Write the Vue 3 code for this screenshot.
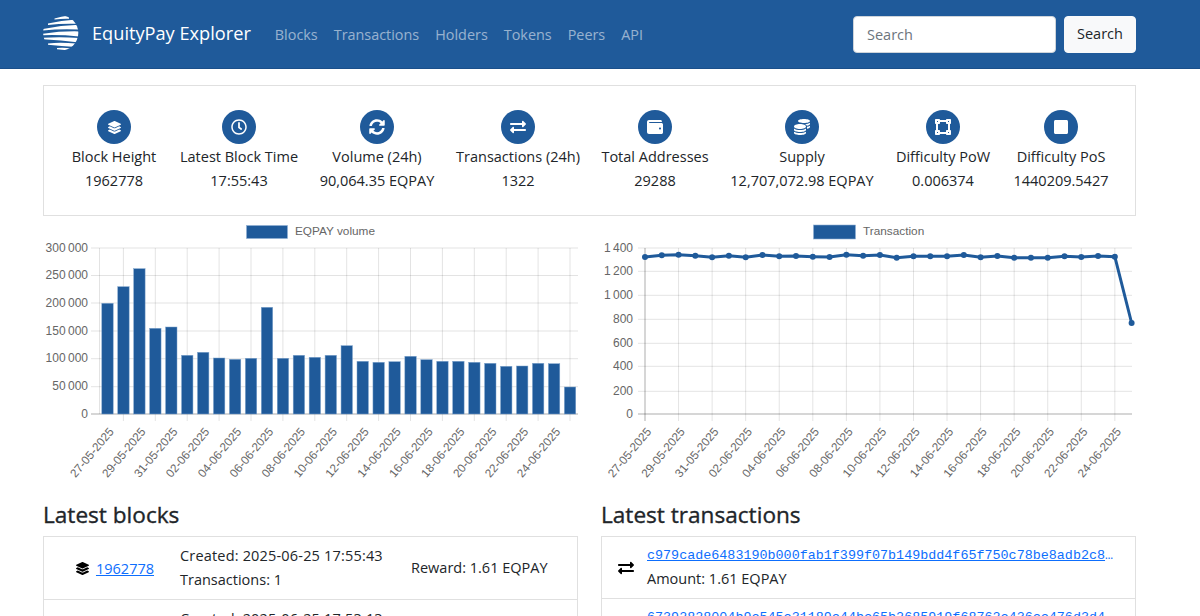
<script setup>
const icons = {
  layers: { vb: '0 0 512 512', d: 'M12.41 148.02l232.94 105.67c6.8 3.09 14.49 3.09 21.29 0l232.94-105.67c16.55-7.51 16.55-32.52 0-40.03L266.65 2.31a25.607 25.607 0 0 0-21.29 0L12.41 107.98c-16.55 7.51-16.55 32.53 0 40.04zm487.18 88.28l-58.09-26.33-161.64 73.27c-7.56 3.43-15.59 5.17-23.86 5.17s-16.29-1.74-23.86-5.17L70.51 209.97l-58.1 26.33c-16.55 7.5-16.55 32.5 0 40l232.94 105.59c6.8 3.08 14.49 3.08 21.29 0L499.59 276.3c16.55-7.5 16.55-32.5 0-40zm0 127.8l-57.87-26.23-161.86 73.37c-7.56 3.43-15.59 5.17-23.86 5.17s-16.29-1.74-23.86-5.17L70.29 337.87 12.41 364.1c-16.55 7.5-16.55 32.5 0 40l232.94 105.59c6.8 3.08 14.49 3.08 21.29 0L499.59 404.1c16.55-7.5 16.55-32.5 0-40z' },
  clock: { vb: '0 0 512 512', d: 'M256 8C119 8 8 119 8 256s111 248 248 248 248-111 248-248S393 8 256 8zm0 448c-110.5 0-200-89.5-200-200S145.5 56 256 56s200 89.5 200 200-89.5 200-200 200zm61.8-104.4l-84.9-61.7c-3.1-2.3-4.9-5.9-4.9-9.7V116c0-6.6 5.4-12 12-12h32c6.6 0 12 5.4 12 12v141.7l66.8 48.6c5.4 3.9 6.5 11.4 2.6 16.8L334.6 349c-3.9 5.3-11.4 6.5-16.8 2.6z' },
  sync: { vb: '0 0 512 512', d: 'M370.72 133.28C339.458 104.008 298.888 87.962 255.848 88c-77.458.068-144.328 53.178-162.791 126.85-1.344 5.363-6.122 9.15-11.651 9.15H24.103c-7.498 0-13.194-6.807-11.807-14.176C33.933 94.924 134.813 8 256 8c66.448 0 126.791 26.136 171.315 68.685L463.03 40.97C478.149 25.851 504 36.559 504 57.941V192c0 13.255-10.745 24-24 24H345.941c-21.382 0-32.09-25.851-16.971-40.971l41.75-41.749zM32 296h134.059c21.382 0 32.09 25.851 16.971 40.971l-41.75 41.75c31.262 29.273 71.835 45.319 114.876 45.28 77.418-.07 144.315-53.144 162.787-126.849 1.344-5.363 6.122-9.15 11.651-9.15h57.304c7.498 0 13.194 6.807 11.807 14.176C478.067 417.076 377.187 504 256 504c-66.448 0-126.791-26.136-171.315-68.685L48.97 471.03C33.851 486.149 8 475.441 8 454.059V320c0-13.255 10.745-24 24-24z' },
  exchange: { vb: '0 0 512 512', d: 'M0 168v-16c0-13.255 10.745-24 24-24h360V80c0-21.367 25.899-32.042 40.971-16.971l80 80c9.372 9.373 9.372 24.569 0 33.941l-80 80C409.956 271.982 384 261.456 384 240v-48H24c-13.255 0-24-10.745-24-24zm488 152H128v-48c0-21.314-25.862-32.08-40.971-16.971l-80 80c-9.372 9.373-9.372 24.569 0 33.941l80 80C102.057 463.997 128 453.437 128 432v-48h360c13.255 0 24-10.745 24-24v-16c0-13.255-10.745-24-24-24z' },
  wallet: { vb: '0 0 512 512', d: 'M461.2 128H80c-8.84 0-16-7.16-16-16s7.16-16 16-16h384c8.84 0 16-7.16 16-16 0-26.51-21.49-48-48-48H64C28.65 32 0 60.65 0 96v320c0 35.35 28.65 64 64 64h397.2c28.02 0 50.8-21.53 50.8-48V176c0-26.47-22.78-48-50.8-48zM416 336c-17.67 0-32-14.33-32-32s14.33-32 32-32 32 14.33 32 32-14.33 32-32 32z' },
  coins: { vb: '0 0 512 512', d: 'M0 405.3V448c0 35.3 86 64 192 64s192-28.7 192-64v-42.7C342.7 434.4 267.2 448 192 448S41.3 434.4 0 405.3zM320 128c106 0 192-28.7 192-64S426 0 320 0 128 28.7 128 64s86 64 192 64zM0 300.4V352c0 35.3 86 64 192 64s192-28.7 192-64v-51.6c-41.3 34-116.9 51.6-192 51.6S41.3 334.4 0 300.4zm416 11c57.3-11.1 96-31.7 96-55.4v-42.7c-23.2 16.4-57.3 27.6-96 34.5v63.6zM192 160C86 160 0 195.8 0 240s86 80 192 80 192-35.8 192-80-86-80-192-80zm219.3 56.3c60-10.8 100.7-32 100.7-56.3v-42.7c-35.5 25.1-96.5 38.6-160.7 41.8 29.5 14.3 51.2 33.5 60 57.2z' },
  vector: { vb: '0 0 512 512', d: 'M512 128V32c0-17.67-14.33-32-32-32h-96c-17.67 0-32 14.33-32 32H160c0-17.67-14.33-32-32-32H32C14.33 0 0 14.33 0 32v96c0 17.67 14.33 32 32 32v192c-17.67 0-32 14.33-32 32v96c0 17.67 14.33 32 32 32h96c17.67 0 32-14.33 32-32h192c0 17.67 14.33 32 32 32h96c17.67 0 32-14.33 32-32v-96c0-17.67-14.33-32-32-32V160c17.67 0 32-14.33 32-32zm-96-64h32v32h-32V64zM64 64h32v32H64V64zm32 384H64v-32h32v32zm352 0h-32v-32h32v32zm-32-96h-32c-17.67 0-32 14.33-32 32v32H160v-32c0-17.67-14.33-32-32-32H96V160h32c17.67 0 32-14.33 32-32V96h192v32c0 17.67 14.33 32 32 32h32v192z' },
  square: { vb: '0 0 448 512', d: 'M400 32H48C21.5 32 0 53.5 0 80v352c0 26.5 21.5 48 48 48h352c26.5 0 48-21.5 48-48V80c0-26.5-21.5-48-48-48z' },
}

const navLinks = ['Blocks', 'Transactions', 'Holders', 'Tokens', 'Peers', 'API']

const stats = [
  { icon: 'layers', size: 13, label: 'Block Height', value: '1962778' },
  { icon: 'clock', size: 16, label: 'Latest Block Time', value: '17:55:43' },
  { icon: 'sync', size: 16, label: 'Volume (24h)', value: '90,064.35 EQPAY' },
  { icon: 'exchange', size: 16, label: 'Transactions (24h)', value: '1322' },
  { icon: 'wallet', size: 16, label: 'Total Addresses', value: '29288' },
  { icon: 'coins', size: 16, label: 'Supply', value: '12,707,072.98 EQPAY' },
  { icon: 'vector', size: 16, label: 'Difficulty PoW', value: '0.006374' },
  { icon: 'square', size: 16, label: 'Difficulty PoS', value: '1440209.5427' },
]

const logoStripes = [
  'M11.5 3.6 Q18 1.6 26 .6 L26 3.8 Q18 3.6 11.5 4.6Z',
  'M5 8.6 Q18 5.2 33 4.4 L33 8.8 Q18 8.4 5 10Z',
  'M0 14 Q18 10.4 36 9.8 L36 14.6 Q18 13.8 0 15.4Z',
  'M0 18.8 Q18 16 36 16.4 L36 21.4 Q18 19.6 0 20.2Z',
  'M0 22.8 Q18 21.8 36 23 L36 27.6 Q18 25.2 0 24.2Z',
  'M5 28.4 Q18 27.2 33 28.6 L33 32 Q18 31.2 5 29.8Z',
  'M14 33 Q22 32.6 28 33.4 L28 35.6 Q22 35.2 14 34.2Z',
]

const dateLabels = ['27-05-2025','29-05-2025','31-05-2025','02-06-2025','04-06-2025','06-06-2025','08-06-2025','10-06-2025','12-06-2025','14-06-2025','16-06-2025','18-06-2025','20-06-2025','22-06-2025','24-06-2025']

/* bar chart: canvas spans x 43..578, y 220..490 */
const barOX = 43
const barTop = [303.3,286.7,268.7,328.3,327,355.3,352.3,358,359.3,358.3,307.3,358.3,355.3,357.3,355.3,345.7,361.3,362.3,361.7,356.3,359.7,361.3,361.3,362.3,363.3,366.3,366,363.3,363.7,387]
const bars = barTop.map((t, i) => ({ x: 107.5 + 15.95 * i - 5.7 - barOX, y: t - 220, h: 414 - t }))
const barYs = [[28,'300 000'],[55.5,'250 000'],[83,'200 000'],[111,'150 000'],[138.7,'100 000'],[166.7,'50 000'],[194,'0']]
const barXs = dateLabels.map((_, i) => 123.4 + 31.9 * i - barOX)

/* line chart: canvas spans x 602..1136, y 220..490 */
const lineOX = 602
const lineZ = [111,106,104,107,112,107,112,105,109,108,110,111,104,107,105,113,109,109,109,105,112,108,113,113,113,109,111,108,110,309]
const points = lineZ.map((z, i) => ({ x: 645 + 16.78 * i - lineOX, y: z / 3 }))
const polyline = points.map(p => `${p.x},${p.y}`).join(' ')
const lineYs = [[28,'1 400'],[51.3,'1 200'],[75.3,'1 000'],[99.3,'800'],[123.3,'600'],[146.3,'400'],[171.3,'200'],[194,'0']]
const lineXs = dateLabels.map((_, i) => 645 + 33.56 * i - lineOX)

const blocks = [
  { height: '1962778', created: '2025-06-25 17:55:43', tx: 1, reward: '1.61 EQPAY' },
  { height: '1962777', created: '2025-06-25 17:53:13', tx: 1, reward: '1.61 EQPAY' },
]
const txs = [
  { hash: 'c979cade6483190b000fab1f399f07b149bdd4f65f750c78be8adb2c8e41d07a', amount: '1.61 EQPAY' },
  { hash: '67392828004b9c545c31189c44bc65b2685919f68762c436cc476d3d4a0be512', amount: '1.61 EQPAY' },
]
</script>

<template>
  <div class="page">
    <header class="navbar">
      <div class="brand">
        <svg class="logo" viewBox="0 0 36 36" width="36" height="36" aria-hidden="true">
          <defs><clipPath id="globe"><circle cx="17.7" cy="18" r="17.6" /></clipPath></defs>
          <g clip-path="url(#globe)">
            <path v-for="(d, i) in logoStripes" :key="i" fill="#fff" :d="d" />
          </g>
        </svg>
        <span class="brand-name">EquityPay Explorer</span>
      </div>
      <nav class="nav">
        <a v-for="l in navLinks" :key="l" class="nav-link">{{ l }}</a>
      </nav>
      <form class="search" @submit.prevent>
        <input class="search-input" type="text" placeholder="Search" />
        <button class="search-btn" type="submit">Search</button>
      </form>
    </header>

    <main class="main">
      <section class="stats">
        <div v-for="s in stats" :key="s.label" class="stat">
          <span class="badge">
            <svg :viewBox="icons[s.icon].vb" :width="s.size" :height="s.size" aria-hidden="true"><path fill="#fff" :d="icons[s.icon].d" /></svg>
          </span>
          <div class="stat-label">{{ s.label }}</div>
          <div class="stat-value">{{ s.value }}</div>
        </div>
      </section>

      <section class="charts">
        <svg class="chart" width="535" height="270" viewBox="0 0 535 270" aria-label="EQPAY volume chart">
          <rect x="203.5" y="5.5" width="41" height="13" fill="#1f5a9a" stroke="#8fb0d4" stroke-width="0.6" />
          <text x="252" y="15" class="tick">EQPAY volume</text>
          <g class="grid">
            <line v-for="y in barYs" :key="y[1]" x1="48" :y1="y[0]" x2="535" :y2="y[0]" />
            <line x1="56.5" y1="28" x2="56.5" y2="194" />
            <line v-for="x in barXs" :key="x" :x1="x" y1="28" :x2="x" y2="201" />
          </g>
          <line class="axis" x1="48" y1="194" x2="535" y2="194" />
          <rect v-for="(b, i) in bars" :key="i" :x="b.x" :y="b.y" width="11.4" :height="b.h" fill="#1f5a9a" stroke="#7ea3cc" stroke-width="0.5" />
          <text v-for="y in barYs" :key="y[1]" x="45" :y="y[0] + 3.5" text-anchor="end" class="tick val">{{ y[1] }}</text>
          <text v-for="(d, i) in dateLabels" :key="d" text-anchor="end" class="tick" :transform="`translate(${barXs[i] - 9} 212) rotate(-50)`">{{ d }}</text>
        </svg>

        <svg class="chart" width="534" height="270" viewBox="0 0 534 270" aria-label="Transaction chart">
          <rect x="211.5" y="5" width="42" height="14" fill="#1f5a9a" stroke="#8fb0d4" stroke-width="0.6" />
          <text x="261" y="15" class="tick">Transaction</text>
          <g class="grid">
            <line v-for="y in lineYs" :key="y[1]" x1="36" :y1="y[0]" x2="530" :y2="y[0]" />
            <line v-for="x in lineXs" :key="x" :x1="x" y1="28" :x2="x" y2="201" />
          </g>
          <line class="axis" x1="36" y1="194" x2="530" y2="194" />
          <line class="axis" x1="43" y1="28" x2="43" y2="201" />
          <polyline :points="polyline" fill="none" stroke="#1f5a9a" stroke-width="3" />
          <circle v-for="(p, i) in points" :key="i" :cx="p.x" :cy="p.y" r="3" fill="#1f5a9a" />
          <text v-for="y in lineYs" :key="y[1]" x="31" :y="y[0] + 3.5" text-anchor="end" class="tick val">{{ y[1] }}</text>
          <text v-for="(d, i) in dateLabels" :key="d" text-anchor="end" class="tick" :transform="`translate(${lineXs[i] + 7} 212) rotate(-50)`">{{ d }}</text>
        </svg>
      </section>

      <section class="lists">
        <div class="col">
          <h2 class="heading">Latest blocks</h2>
          <div class="list">
            <div v-for="b in blocks" :key="b.height" class="row block-row">
              <div class="block-id">
                <svg :viewBox="icons.layers.vb" width="13" height="13" aria-hidden="true"><path fill="#000" :d="icons.layers.d" /></svg>
                <a class="link">{{ b.height }}</a>
              </div>
              <div class="block-meta">
                <div class="created">Created: {{ b.created }}</div>
                <div>Transactions: {{ b.tx }}</div>
              </div>
              <div class="block-reward">Reward: {{ b.reward }}</div>
            </div>
          </div>
        </div>
        <div class="col">
          <h2 class="heading">Latest transactions</h2>
          <div class="list">
            <div v-for="t in txs" :key="t.hash" class="row tx-row">
              <svg class="tx-icon" :viewBox="icons.exchange.vb" width="16" height="16" aria-hidden="true"><path fill="#000" :d="icons.exchange.d" /></svg>
              <div class="tx-body">
                <a class="link hash">{{ t.hash }}</a>
                <div>Amount: {{ t.amount }}</div>
              </div>
            </div>
          </div>
        </div>
      </section>
    </main>
  </div>
</template>

<style>
html, body { margin: 0; background: #fff; }
</style>

<style scoped>
.page {
  width: 1200px;
  height: 616px;
  overflow: hidden;
  font-family: "Open Sans", "Noto Sans", sans-serif;
  font-size: 14.5px;
  line-height: 24px;
  color: #212529;
}
.navbar {
  height: 69px;
  box-sizing: border-box;
  display: flex;
  align-items: center;
  padding: 0 64px 0 43px;
  background: #1f5a9a;
  border-bottom: 1px solid #1a4f8a;
}
.brand { display: flex; align-items: center; gap: 13px; margin-right: 24px; margin-top: -3px; }
.logo { flex: none; }
.brand-name { color: #fff; font-size: 18.2px; }
.nav { display: flex; gap: 16px; flex: 1; margin-top: 1px; }
.nav-link { color: rgba(255,255,255,.55); font-size: 14.4px; }
.search { display: flex; gap: 8px; }
.search-input {
  width: 203px;
  height: 37px;
  box-sizing: border-box;
  padding: 0 13px;
  border: 1px solid #ced4da;
  border-radius: 4px;
  font: inherit;
  background: #fff;
}
.search-input::placeholder { color: #6c757d; opacity: 1; }
.search-btn {
  width: 72px;
  height: 37px;
  padding: 0;
  border: 1px solid #f8f9fa;
  border-radius: 4px;
  background: #f8f9fa;
  color: #212529;
  font: inherit;
}
.main { padding: 16px 64px 0 43px; }
.stats {
  height: 131px;
  box-sizing: border-box;
  border: 1px solid #e0e0e0;
  display: grid;
  grid-template-columns: 124px 126px 150px 132px 142px 152px 130px 106px;
  align-content: start;
  padding: 24px 0 0 8px;
}
.stat { display: flex; flex-direction: column; align-items: center; min-width: 0; }
.badge {
  width: 34px;
  height: 34px;
  border-radius: 50%;
  background: #1f5a9a;
  display: flex;
  align-items: center;
  justify-content: center;
}
.stat-label { margin-top: 1px; white-space: nowrap; }
.stat-value { white-space: nowrap; }
.charts { display: flex; justify-content: space-between; margin-top: 4px; }
.chart { display: block; flex: none; }
.tick { font-family: "Liberation Sans", Arial, sans-serif; font-size: 11.8px; fill: #666; }
.val { font-size: 12px; word-spacing: -1px; }
.grid line { stroke: rgba(0,0,0,.11); stroke-width: 1; }
.axis { stroke: rgba(0,0,0,.22); stroke-width: 1; }
.lists { display: flex; gap: 23px; margin-top: 9px; }
.col { width: 535px; flex: none; }
.heading { margin: 0 0 5px; font-size: 22.6px; line-height: 32px; font-weight: 400; color: #212529; -webkit-text-stroke: 0.35px #212529; }
.list { border: 1px solid #e0e0e0; border-bottom: 0; }
.row { border-bottom: 1px solid #e0e0e0; box-sizing: border-box; }
.block-row { height: 63px; display: flex; align-items: center; }
.block-id { width: 136px; box-sizing: border-box; padding: 1px 0 0 6px; display: flex; align-items: center; justify-content: center; gap: 7px; }
.block-meta { width: 230px; white-space: nowrap; }
.created { letter-spacing: 0.18px; }
.block-reward { white-space: nowrap; padding-left: 1px; }
.link { color: #0d6efd; text-decoration: underline; }
.tx-row { height: 62px; display: flex; align-items: center; padding: 0 14px 0 16px; gap: 13px; }
.tx-icon { flex: none; }
.tx-body { min-width: 0; flex: 1; margin-top: -1px; }
.hash { display: block; font-family: "Liberation Mono", monospace; font-size: 13.4px; line-height: 23px; overflow: hidden; white-space: nowrap; text-overflow: ellipsis; }
</style>
